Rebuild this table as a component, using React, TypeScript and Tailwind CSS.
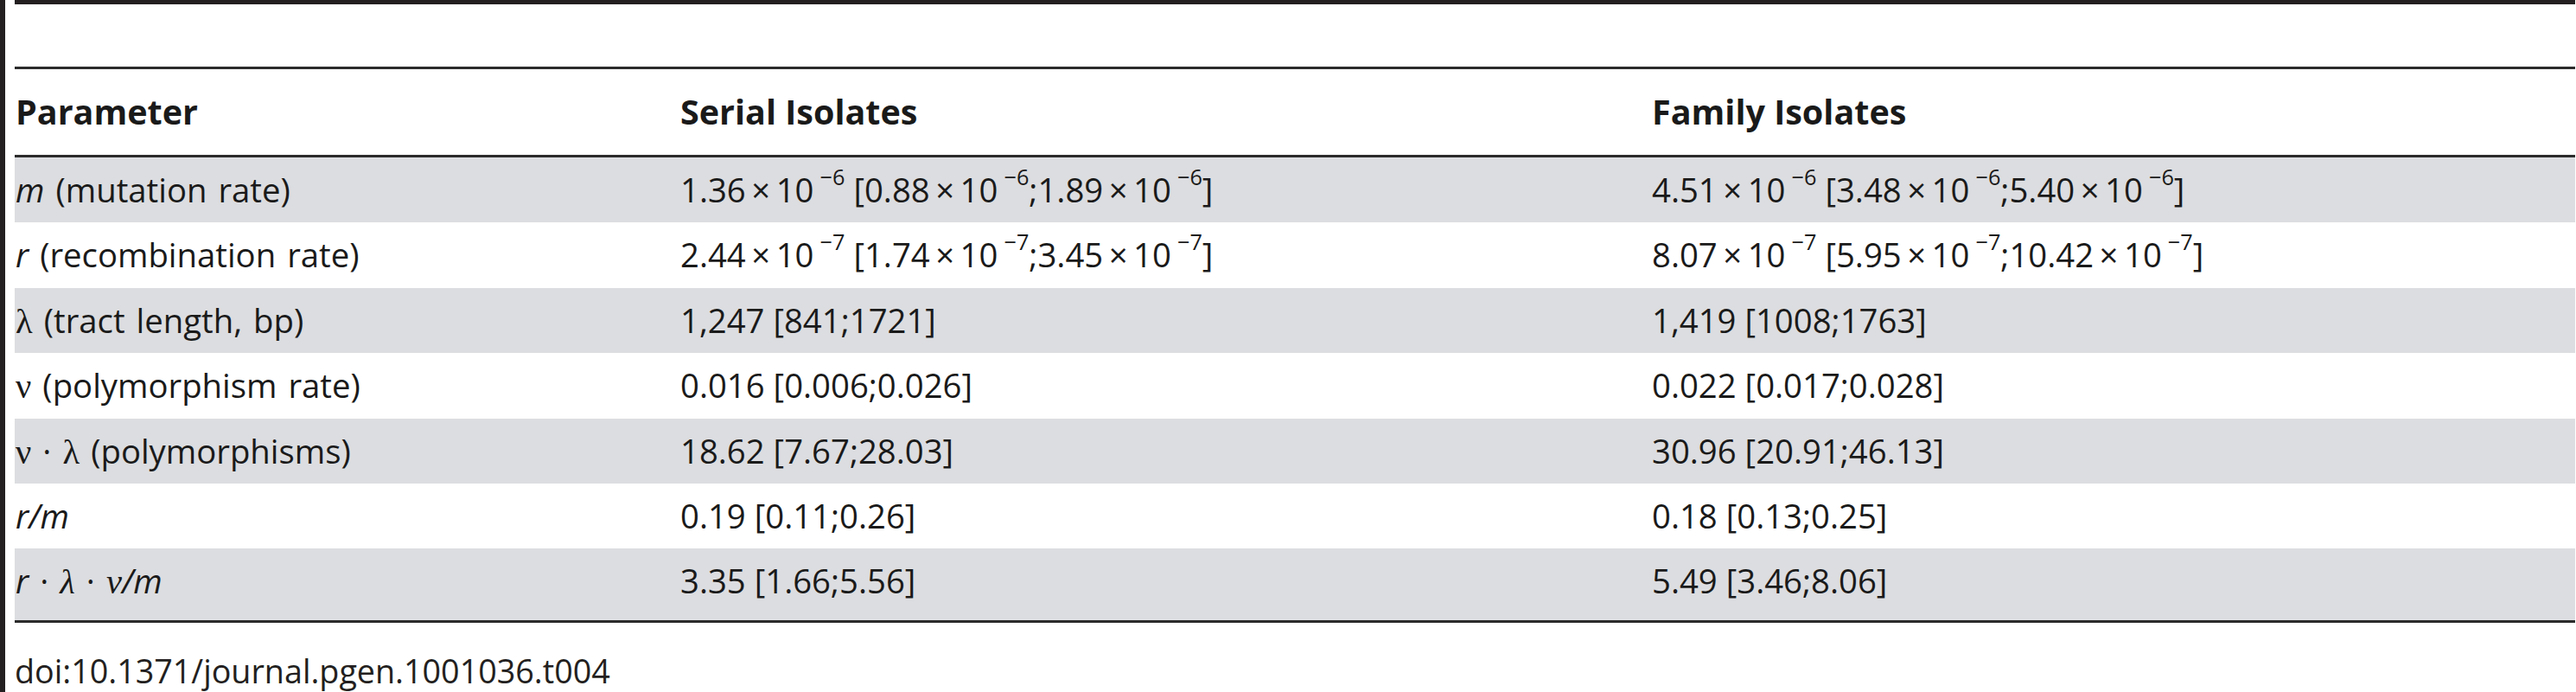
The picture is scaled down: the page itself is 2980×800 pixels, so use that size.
import React from "react";

const Sci = ({ m, e }: { m: string; e: string }) => (
  <>
    {m}
    <span className="mx-[0.17em]">×</span>10
    <sup className="text-[0.66em] top-[-0.8em] ml-[0.28em]">−{e}</sup>
  </>
);

const G = ({ c, it }: { c: string; it?: boolean }) => (
  <span className={"font-['Liberation_Serif',serif] text-[1.06em] " + (it ? "italic" : "")}>{c}</span>
);

type Row = { p: React.ReactNode; s: React.ReactNode; f: React.ReactNode };

const rows: Row[] = [
  {
    p: (
      <>
        <i>m</i> (mutation rate)
      </>
    ),
    s: (
      <>
        <Sci m="1.36" e="6" /> [<Sci m="0.88" e="6" />;<Sci m="1.89" e="6" />]
      </>
    ),
    f: (
      <>
        <Sci m="4.51" e="6" /> [<Sci m="3.48" e="6" />;<Sci m="5.40" e="6" />]
      </>
    ),
  },
  {
    p: (
      <>
        <i>r</i> (recombination rate)
      </>
    ),
    s: (
      <>
        <Sci m="2.44" e="7" /> [<Sci m="1.74" e="7" />;<Sci m="3.45" e="7" />]
      </>
    ),
    f: (
      <>
        <Sci m="8.07" e="7" /> [<Sci m="5.95" e="7" />;<Sci m="10.42" e="7" />]
      </>
    ),
  },
  {
    p: (
      <>
        <G c="λ" /> (tract length, bp)
      </>
    ),
    s: "1,247 [841;1721]",
    f: "1,419 [1008;1763]",
  },
  {
    p: (
      <>
        <G c="ν" /> (polymorphism rate)
      </>
    ),
    s: "0.016 [0.006;0.026]",
    f: "0.022 [0.017;0.028]",
  },
  {
    p: (
      <>
        <G c="ν" /> · <G c="λ" /> (polymorphisms)
      </>
    ),
    s: "18.62 [7.67;28.03]",
    f: "30.96 [20.91;46.13]",
  },
  {
    p: <i>r/m</i>,
    s: "0.19 [0.11;0.26]",
    f: "0.18 [0.13;0.25]",
  },
  {
    p: (
      <>
        <i>r</i> · <G c="λ" it /> · <G c="ν" it />
        <i>/m</i>
      </>
    ),
    s: "3.35 [1.66;5.56]",
    f: "5.49 [3.46;8.06]",
  },
];

export default function App() {
  return (
    <div className="w-[2980px] h-[800px] bg-white flex overflow-hidden font-['Open_Sans',sans-serif] text-[38.3px] text-[#1a1a1a]">
      <div className="w-[6px] h-full bg-[#231f20] shrink-0" />
      <div className="w-[11px] shrink-0" />
      <div className="flex-1 flex flex-col mr-[1px]">
        <div className="h-[5px] bg-[#231f20] shrink-0" />
        <div className="h-[72px] shrink-0" />
        <div className="h-[3px] bg-[#2b2b2b] shrink-0" />
        <div className="grid grid-cols-[770px_1124px_1fr] h-[99px] leading-[99px] font-bold text-[39.5px] whitespace-nowrap shrink-0">
          <div className="pl-[1px]">Parameter</div>
          <div>Serial Isolates</div>
          <div>Family Isolates</div>
        </div>
        <div className="h-[3px] bg-[#2b2b2b] shrink-0" />
        {rows.map((r, i) => (
          <div
            key={i}
            className={
              "grid grid-cols-[770px_1124px_1fr] leading-[75.4px] whitespace-nowrap shrink-0 " +
              (i % 2 === 0 ? "bg-[#dcdde0] " : "bg-white ") +
              (i === rows.length - 1 ? "h-[83px]" : "h-[75.4px]")
            }
          >
            <div className="pl-[1px] [word-spacing:0.08em]">{r.p}</div>
            <div>{r.s}</div>
            <div>{r.f}</div>
          </div>
        ))}
        <div className="h-[3px] bg-[#2b2b2b] shrink-0" />
        <div className="h-[80px] leading-[111px] text-[37.7px] whitespace-nowrap text-[#231f20] shrink-0">
          doi:10.1371/journal.pgen.1001036.t004
        </div>
      </div>
    </div>
  );
}
